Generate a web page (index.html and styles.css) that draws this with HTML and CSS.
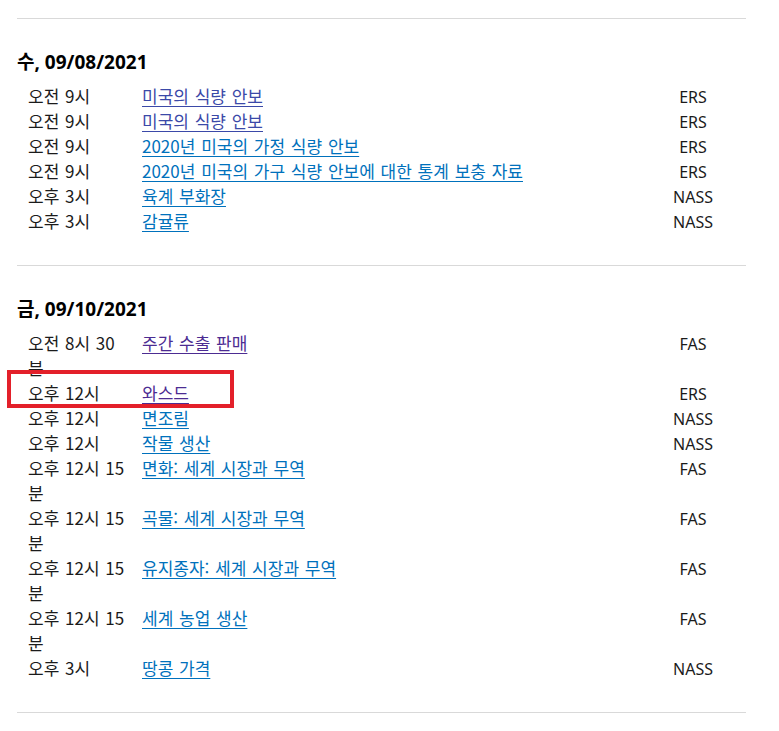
FILE: index.html
```html
<!DOCTYPE html>
<html lang="ko">
<head>
<meta charset="utf-8">
<title>보고서 일정</title>
<link rel="stylesheet" href="styles.css">
</head>
<body>
<div class="page">
  <section class="day">
    <h2 class="day-title">수, 09/08/2021</h2>
    <div class="rows">
      <div class="row"><span class="time"><span class="ko">오전 9시</span></span><span class="title"><a class="link visited-soft" href="#">미국의 식량 안보</a></span><span class="src">ERS</span></div>
      <div class="row"><span class="time"><span class="ko">오전 9시</span></span><span class="title"><a class="link visited-soft" href="#">미국의 식량 안보</a></span><span class="src">ERS</span></div>
      <div class="row"><span class="time"><span class="ko">오전 9시</span></span><span class="title"><a class="link" href="#">2020년 미국의 가정 식량 안보</a></span><span class="src">ERS</span></div>
      <div class="row"><span class="time"><span class="ko">오전 9시</span></span><span class="title"><a class="link" href="#">2020년 미국의 가구 식량 안보에 대한 통계 보충 자료</a></span><span class="src">ERS</span></div>
      <div class="row"><span class="time"><span class="ko">오후 3시</span></span><span class="title"><a class="link" href="#">육계 부화장</a></span><span class="src">NASS</span></div>
      <div class="row"><span class="time"><span class="ko">오후 3시</span></span><span class="title"><a class="link" href="#">감귤류</a></span><span class="src">NASS</span></div>
    </div>
  </section>
  <section class="day">
    <h2 class="day-title">금, 09/10/2021</h2>
    <div class="rows">
      <div class="row"><span class="time"><span class="ko">오전 8시 30 분</span></span><span class="title"><a class="link visited" href="#">주간 수출 판매</a></span><span class="src">FAS</span></div>
      <div class="row highlighted"><span class="time"><span class="ko">오후 12시</span></span><span class="title"><a class="link visited" href="#">와스드</a></span><span class="src">ERS</span><span class="mark"></span></div>
      <div class="row"><span class="time"><span class="ko">오후 12시</span></span><span class="title"><a class="link" href="#">면조림</a></span><span class="src">NASS</span></div>
      <div class="row"><span class="time"><span class="ko">오후 12시</span></span><span class="title"><a class="link" href="#">작물 생산</a></span><span class="src">NASS</span></div>
      <div class="row"><span class="time"><span class="ko">오후 12시 15 분</span></span><span class="title"><a class="link" href="#">면화: 세계 시장과 무역</a></span><span class="src">FAS</span></div>
      <div class="row"><span class="time"><span class="ko">오후 12시 15 분</span></span><span class="title"><a class="link" href="#">곡물: 세계 시장과 무역</a></span><span class="src">FAS</span></div>
      <div class="row"><span class="time"><span class="ko">오후 12시 15 분</span></span><span class="title"><a class="link" href="#">유지종자: 세계 시장과 무역</a></span><span class="src">FAS</span></div>
      <div class="row"><span class="time"><span class="ko">오후 12시 15 분</span></span><span class="title"><a class="link" href="#">세계 농업 생산</a></span><span class="src">FAS</span></div>
      <div class="row"><span class="time"><span class="ko">오후 3시</span></span><span class="title"><a class="link" href="#">땅콩 가격</a></span><span class="src">NASS</span></div>
    </div>
  </section>
  <div class="end-rule"></div>
</div>
</body>
</html>
```

FILE: styles.css
```css
html, body {
  margin: 0;
  padding: 0;
  background: #ffffff;
}

body {
  font-family: "Noto Sans", "Noto Sans CJK KR", sans-serif;
  font-size: 16px;
  color: #1b1b1b;
}

.page {
  padding: 18px 33px 0 17px;
}

.day {
  border-top: 1px solid #d9d9d9;
  padding: 30px 0 30px 0;
}

.end-rule {
  border-top: 1px solid #d9d9d9;
}

.day-title {
  margin: 0 0 10px 0;
  font-size: 19px;
  line-height: 26px;
  font-weight: 700;
  color: #000000;
}

.rows {
  display: flex;
  flex-direction: column;
  padding-left: 11px;
  padding-right: 3px;
}

.row {
  position: relative;
  display: grid;
  grid-template-columns: 104px 1fr 100px;
  column-gap: 10px;
  line-height: 25px;
}

.ko,
.link {
  font-family: "Noto Sans CJK KR", "Noto Sans", sans-serif;
  font-size: 17px;
  line-height: 22px;
  word-spacing: 1px;
}

.time {
  color: #1b1b1b;
}

.title {
  min-width: 0;
}

.link {
  color: #0071bc;
  text-decoration: underline;
  text-underline-offset: 3px;
}

.link.visited {
  color: #4c2c92;
}

.link.visited-soft {
  color: #3b49a8;
}

.src {
  text-align: center;
  color: #1b1b1b;
}

.mark {
  position: absolute;
  left: -21px;
  top: -12px;
  width: 219px;
  height: 30px;
  border: 4px solid #e3202a;
  pointer-events: none;
}
```
